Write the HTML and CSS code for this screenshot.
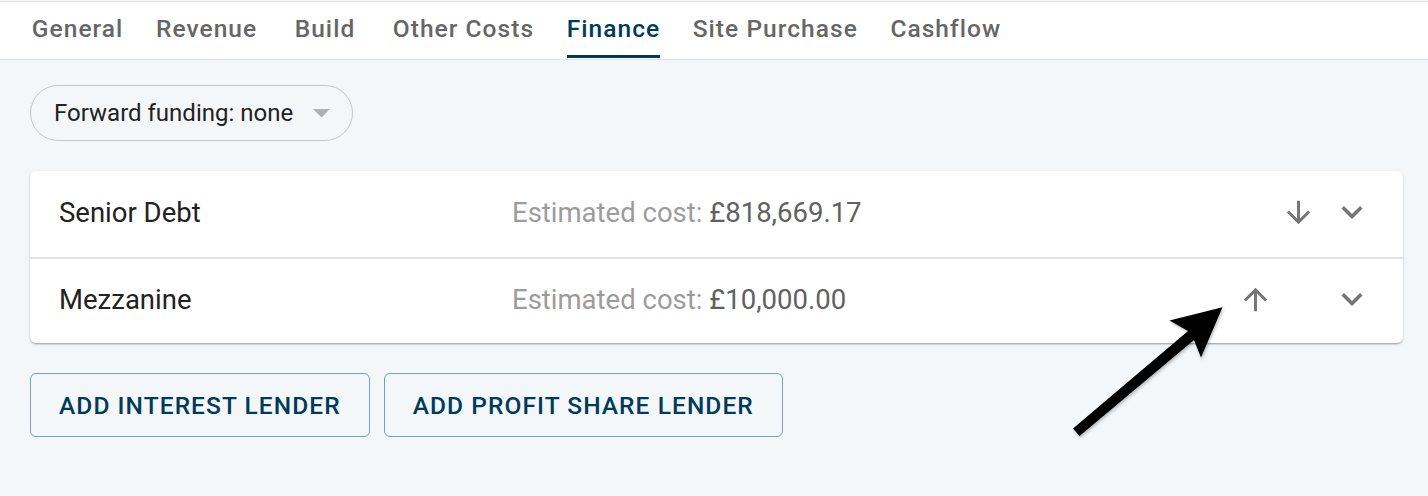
FILE: index.html
```html
<!DOCTYPE html>
<html lang="en">
<head>
<meta charset="utf-8">
<title>Finance</title>
<link rel="stylesheet" href="styles.css">
</head>
<body>
<header class="tabbar">
  <nav class="tabs">
    <div class="tab"><span class="tab-text">General</span></div>
    <div class="tab"><span class="tab-text">Revenue</span></div>
    <div class="tab"><span class="tab-text">Build</span></div>
    <div class="tab"><span class="tab-text">Other Costs</span></div>
    <div class="tab active"><span class="tab-text">Finance</span></div>
    <div class="tab"><span class="tab-text">Site Purchase</span></div>
    <div class="tab"><span class="tab-text">Cashflow</span></div>
  </nav>
</header>
<main class="content">
  <div class="select">
    <span class="select-label">Forward funding: none</span>
    <svg class="select-caret" viewBox="7 10 10 5" width="17" height="8.5"><path d="M7 10l5 5 5-5z"/></svg>
  </div>

  <section class="card">
    <div class="row">
      <div class="row-title">Senior Debt</div>
      <div class="row-cost"><span class="cost-label">Estimated cost:</span> <span class="cost-value">£818,669.17</span></div>
      <div class="row-actions">
        <span class="icon-btn arrow hidden"><svg viewBox="0 0 24 24"><path d="M4 12l1.41 1.41L11 7.83V20h2V7.83l5.58 5.59L20 12l-8-8-8 8z"/></svg></span>
        <span class="icon-btn arrow"><svg viewBox="0 0 24 24"><path d="M20 12l-1.41-1.41L13 16.17V4h-2v12.17l-5.58-5.59L4 12l8 8 8-8z"/></svg></span>
        <span class="icon-btn expand"><svg viewBox="0 0 24 24"><path d="M16.59 8.59L12 13.17 7.41 8.59 6 10l6 6 6-6z"/></svg></span>
      </div>
    </div>
    <div class="row">
      <div class="row-title">Mezzanine</div>
      <div class="row-cost"><span class="cost-label">Estimated cost:</span> <span class="cost-value">£10,000.00</span></div>
      <div class="row-actions">
        <span class="icon-btn arrow"><svg viewBox="0 0 24 24"><path d="M4 12l1.41 1.41L11 7.83V20h2V7.83l5.58 5.59L20 12l-8-8-8 8z"/></svg></span>
        <span class="icon-btn arrow hidden"><svg viewBox="0 0 24 24"><path d="M20 12l-1.41-1.41L13 16.17V4h-2v12.17l-5.58-5.59L4 12l8 8 8-8z"/></svg></span>
        <span class="icon-btn expand"><svg viewBox="0 0 24 24"><path d="M16.59 8.59L12 13.17 7.41 8.59 6 10l6 6 6-6z"/></svg></span>
      </div>
    </div>
  </section>

  <div class="actions">
    <button class="btn">Add interest lender</button>
    <button class="btn">Add profit share lender</button>
  </div>
</main>

<svg class="annotation" width="1428" height="496" viewBox="0 0 1428 496">
  <defs>
    <filter id="sh" x="-10%" y="-10%" width="130%" height="130%">
      <feDropShadow dx="1" dy="2" stdDeviation="1.5" flood-color="#000" flood-opacity="0.25"/>
    </filter>
  </defs>
  <polygon filter="url(#sh)" fill="#000" points="1073,428.5 1188,331 1169.5,320.5 1222.5,307.3 1201,357.5 1194,340 1079.5,436"/>
</svg>
</body>
</html>
```
FILE: styles.css
```css
* { box-sizing: border-box; }
html, body { margin: 0; padding: 0; }
body {
  background: #f4f7fa;
  font-family: Roboto, "Liberation Sans", Arial, sans-serif;
  width: 1428px;
  height: 496px;
  overflow: hidden;
  position: relative;
}
.tabbar {
  background: #fff;
  border-top: 1px solid #e3e3e3;
  margin-top: 1px;
  border-bottom: 1px solid #e0e0e0;
  height: 59px;
  padding-left: 15px;
}
.tabs { display: flex; height: 100%; }
.tab {
  min-width: 103px;
  padding: 0 16.8px;
  height: 100%;
  display: flex;
  justify-content: center;
  font-size: 24.5px;
  font-weight: 500;
  letter-spacing: 1.05px;
  color: #666;
}
.tab-text {
  position: relative;
  display: flex;
  align-items: center;
  height: 100%;
  padding-bottom: 4px;
  margin-right: -1.05px;
}
.tab.active { color: #003a5c; }
.tab.active .tab-text::after {
  content: "";
  position: absolute;
  left: 0; right: 0;
  bottom: 1px;
  height: 3.5px;
  background: #003a5c;
}
.content { padding: 25px 25px 0 30px; }
.select {
  display: inline-flex;
  align-items: center;
  height: 56px;
  width: 323px;
  border: 1px solid #c4c4c4;
  border-radius: 28px;
  padding-left: 23px;
  font-size: 24px;
  color: #222;
}
.select-label { flex: 1; }
.select-caret { fill: #b0b0b0; margin-right: 22px; }
.card {
  margin-top: 30px;
  background: #fff;
  border-radius: 6px;
  box-shadow: 0 2px 2px -1px rgba(0,0,0,0.25), 0 1px 2px rgba(0,0,0,0.12), 0 1px 4px rgba(0,0,0,0.06);
}
.row {
  display: flex;
  align-items: center;
  height: 86px;
  padding-left: 29px;
  padding-right: 30px;
  padding-bottom: 4px;
  font-size: 27.5px;
}
.row + .row { border-top: 2px solid #e2e2e2; }
.row-title { width: 453px; color: #222; }
.row-cost { flex: 1; }
.cost-label { color: #9c9c9c; }
.cost-value { color: #616161; }
.row-actions { display: flex; align-items: center; }
.icon-btn { display: flex; align-items: center; justify-content: center; }
.icon-btn svg { fill: #757575; }
.icon-btn.arrow { width: 43px; height: 43px; }
.icon-btn.arrow svg { width: 35px; height: 35px; }
.icon-btn.expand { width: 42px; height: 42px; margin-left: 11px; }
.icon-btn.expand svg { width: 42px; height: 42px; }
.hidden { visibility: hidden; }
.actions { display: flex; gap: 14px; margin-top: 30px; }
.btn {
  height: 64px;
  padding: 0 28px;
  background: transparent;
  border: 1px solid #7f9cb0;
  border-radius: 6px;
  color: #003a5c;
  font-family: Roboto, "Liberation Sans", Arial, sans-serif;
  font-size: 24.5px;
  font-weight: 500;
  letter-spacing: 1.07px;
  text-transform: uppercase;
}
.annotation { position: absolute; left: 0; top: 0; pointer-events: none; }
```
